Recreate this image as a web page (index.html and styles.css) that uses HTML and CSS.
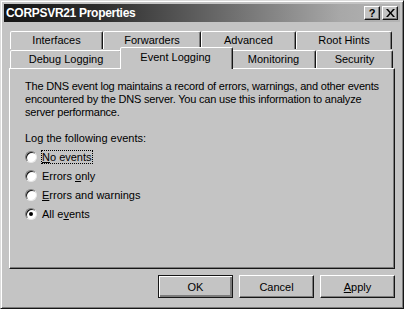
FILE: index.html
```html
<!DOCTYPE html>
<html lang="en">
<head>
    <meta charset="UTF-8">
    <title>CORPSVR21 Properties</title>
    <link rel="stylesheet" href="styles.css">
</head>
<body>
    <div class="window">
        <div class="titlebar">
            <span class="title">CORPSVR21 Properties</span>
            <div class="title-buttons">
                <button class="cap-btn">?</button>
                <button class="cap-btn close">
                    <svg width="9" height="8" viewBox="0 0 9 8"><path d="M0 0h2l2.5 3 2.5-3h2L5.5 4 9 8H7L4.5 5 2 8H0l3.5-4z" fill="#000"/></svg>
                </button>
            </div>
        </div>

        <div class="tabs">
            <div class="tab-row back">
                <div class="tab w-interfaces">Interfaces</div>
                <div class="tab w-forwarders">Forwarders</div>
                <div class="tab w-advanced">Advanced</div>
                <div class="tab w-roothints">Root Hints</div>
            </div>
            <div class="tab-row front">
                <div class="tab w-debug">Debug Logging</div>
                <div class="tab active w-event">Event Logging</div>
                <div class="tab w-monitoring">Monitoring</div>
                <div class="tab w-security">Security</div>
            </div>
        </div>

        <div class="panel">
            <p class="intro">The DNS event log maintains a record of errors, warnings, and other events encountered by the DNS server. You can use this information to analyze server performance.</p>
            <p class="label">Log the following events:</p>
            <div class="options">
                <label class="radio"><span class="dot"></span><span class="focus"><u>N</u>o events</span></label>
                <label class="radio"><span class="dot"></span><span>Errors <u>o</u>nly</span></label>
                <label class="radio"><span class="dot"></span><span><u>E</u>rrors and warnings</span></label>
                <label class="radio"><span class="dot checked"></span><span>All e<u>v</u>ents</span></label>
            </div>
        </div>

        <div class="actions">
            <button class="btn default">OK</button>
            <button class="btn">Cancel</button>
            <button class="btn"><u>A</u>pply</button>
        </div>
    </div>
</body>
</html>
```

FILE: styles.css
```css
:root {
    --face: #c4c4c4;
    --light: #ffffff;
    --shadow: #7c7c7c;
    --dark: #161616;
}

* {
    box-sizing: border-box;
}

body {
    margin: 0;
    background: var(--face);
    font-family: 'Liberation Sans', Arial, sans-serif;
    font-size: 11px;
    color: #000;
}

.window {
    width: 404px;
    height: 309px;
    background: var(--face);
    border: 1px solid;
    border-color: #dcdcdc var(--dark) var(--dark) #dcdcdc;
    box-shadow: inset 1px 1px 0 var(--light), inset -1px -1px 0 var(--shadow);
    padding: 3px 3px 0;
}

.titlebar {
    height: 18px;
    background: linear-gradient(90deg, #151515 0%, #2e2e2e 25%, #6a6a6a 55%, #a8a8a8 85%, #b4b4b4 100%);
    display: flex;
    align-items: center;
    justify-content: space-between;
    padding: 0 2px 0 2px;
}

.title {
    color: #fff;
    font-weight: bold;
    font-size: 12px;
    letter-spacing: -0.3px;
}

.title-buttons {
    display: flex;
    gap: 2px;
}

.cap-btn {
    width: 16px;
    height: 14px;
    padding: 0;
    background: var(--face);
    border: 1px solid;
    border-color: var(--light) var(--dark) var(--dark) var(--light);
    box-shadow: inset -1px -1px 0 var(--shadow);
    font-family: 'Liberation Sans', Arial, sans-serif;
    font-weight: bold;
    font-size: 11px;
    line-height: 11px;
    display: flex;
    align-items: center;
    justify-content: center;
}

.tabs {
    padding: 9px 0 0 6px;
    position: relative;
    z-index: 1;
}

.tab-row {
    display: flex;
    height: 18px;
}

.tab-row.front {
    height: 19px;
    align-items: flex-end;
}

.tab {
    height: 18px;
    background: var(--face);
    border: 1px solid;
    border-bottom: none;
    border-color: var(--light) var(--dark) transparent var(--light);
    box-shadow: inset -1px 0 0 var(--shadow);
    border-radius: 2px 2px 0 0;
    font-size: 11px;
    text-align: center;
    line-height: 17px;
}

.tab.active {
    height: 22px;
    margin: 0 -2px -1px;
    padding-right: 2px;
    line-height: 18px;
    position: relative;
    z-index: 2;
}

.w-interfaces { width: 93px; }
.w-forwarders { width: 98px; }
.w-advanced { width: 95px; }
.w-roothints { width: 96px; }
.w-debug { width: 112px; }
.w-event { width: 113px; }
.w-monitoring { width: 85px; }
.w-security { width: 77px; }

.panel {
    margin: 0 5px 0 5px;
    height: 201px;
    border: 1px solid;
    border-color: var(--light) var(--dark) var(--dark) var(--light);
    box-shadow: inset -1px -1px 0 var(--shadow);
    padding: 11px 10px 0 15px;
}

.intro {
    margin: 0;
    line-height: 13px;
    letter-spacing: -0.2px;
}

.label {
    margin: 13px 0 0;
    line-height: 13px;
}

.options {
    display: flex;
    flex-direction: column;
    gap: 6px;
    margin-top: 5px;
}

.radio {
    display: flex;
    align-items: center;
    gap: 5px;
    height: 13px;
}

.dot {
    width: 12px;
    height: 12px;
    border-radius: 50%;
    background: #fff;
    border: 1px solid;
    border-color: #7c7c7c #e8e8e8 #e8e8e8 #7c7c7c;
    box-shadow: inset 1px 1px 0 #161616;
    position: relative;
}

.dot.checked::after {
    content: "";
    position: absolute;
    left: 3px;
    top: 3px;
    width: 4px;
    height: 4px;
    border-radius: 50%;
    background: #000;
}

.focus {
    outline: 1px dotted #000;
    outline-offset: 0;
}

.actions {
    display: flex;
    justify-content: flex-end;
    gap: 6px;
    padding: 6px 5px 0 0;
}

.btn {
    width: 75px;
    height: 23px;
    padding: 0;
    background: var(--face);
    border: 1px solid;
    border-color: var(--light) var(--dark) var(--dark) var(--light);
    box-shadow: inset -1px -1px 0 var(--shadow);
    font-family: 'Liberation Sans', Arial, sans-serif;
    font-size: 11px;
    color: #000;
}

.btn.default {
    border: 1px solid var(--dark);
    box-shadow: inset 1px 1px 0 var(--light), inset -2px -2px 0 var(--shadow);
}
```
